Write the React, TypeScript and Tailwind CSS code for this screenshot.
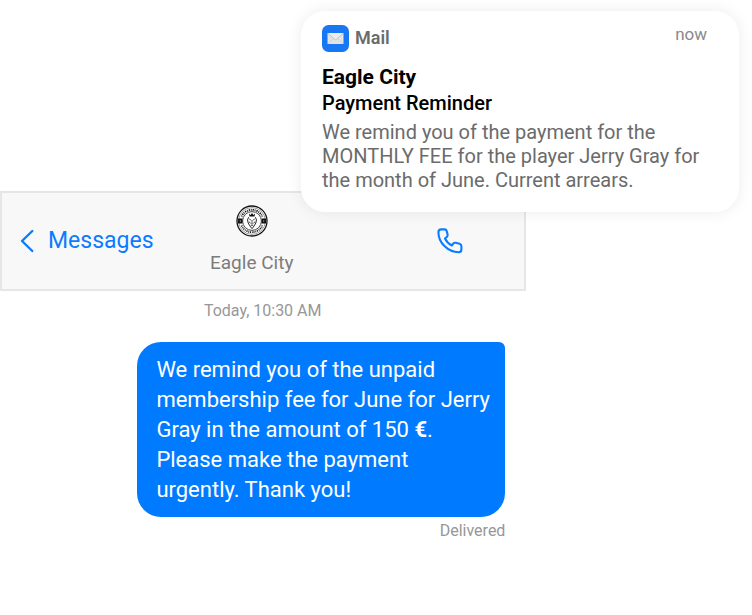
import React from 'react';

interface Message {
  time: string;
  status: string;
}

const message: Message = {
  time: 'Today, 10:30 AM',
  status: 'Delivered',
};

const MailIcon: React.FC = () => (
  <svg viewBox="0 0 27 27" className="h-[27px] w-[27px]" aria-hidden="true">
    <rect width="27" height="27" rx="6.5" fill="#1877f2" />
    <rect x="5.5" y="8" width="16" height="11" rx="0.6" fill="#e2e3e5" />
    <path d="M6 18.6 11.4 13.4M21 18.6l-5.4-5.2" stroke="#c6c8cb" strokeWidth="0.7" />
    <path d="M5.8 8.3 12.6 14.3q.9.7 1.8 0L21.2 8.3" fill="#ececed" stroke="#b9bbbf" strokeWidth="0.8" />
  </svg>
);

const BackIcon: React.FC = () => (
  <svg viewBox="0 0 14 24" className="h-6 w-3.5" fill="none" stroke="currentColor" aria-hidden="true">
    <path d="M12.3 2 2 12l10.3 10" strokeWidth="2.4" strokeLinecap="round" strokeLinejoin="round" />
  </svg>
);

const PhoneIcon: React.FC = () => (
  <svg viewBox="0 0 26 26" className="h-[26px] w-[26px]" fill="none" stroke="currentColor" aria-hidden="true">
    <path
      d="M1.4 4.2Q1.4 1.4 4.2 1.4h3.4q1.7 0 2.1 1.6l.9 3.5q.4 1.6-.9 2.6L8 10.5q2.1 4.6 6.8 7l1.4-1.8q1-1.3 2.6-.9l3.7.9q1.9.5 1.9 2.3v3.4q0 2.8-2.8 2.8C10.8 24.2 1.4 14.6 1.4 4.2Z"
      strokeWidth="2.1"
      strokeLinecap="round"
      strokeLinejoin="round"
    />
  </svg>
);

const ClubCrest: React.FC = () => (
  <svg viewBox="0 0 32 32" className="h-8 w-8" fill="none" stroke="#111" aria-hidden="true">
    <circle cx="16" cy="16" r="15" fill="#fff" strokeWidth="1.3" />
    <circle cx="16" cy="16" r="13.4" strokeWidth="0.4" />
    <circle cx="16" cy="16" r="9.4" strokeWidth="0.8" />
    {/* Ring lettering */}
    <path d="M5.6 11.5a11.4 11.4 0 0 1 20.8 0" strokeWidth="1.8" strokeDasharray="0.9 0.9 1.3 0.8" />
    <path d="M5.6 20.5a11.4 11.4 0 0 0 20.8 0" strokeWidth="1.8" strokeDasharray="1.1 0.9 0.8 0.8" />
    <path d="M2 13.6h4.4v4.8H2zM25.6 13.6H30v4.8h-4.4z" fill="#111" stroke="none" />
    <path d="M3.8 15.4h.9v1.2h-.9zM27.3 15.4h.9v1.2h-.9z" fill="#fff" stroke="none" />
    {/* Crowned head */}
    <path d="m13 8.6 1.6 1.4L16 8l1.4 2L19 8.6l-.5 2.8h-5z" fill="#111" stroke="none" />
    <path d="M12.6 12.2q-2 2.6-.4 5.8 1 2.6 3.8 5.6 2.8-3 3.8-5.6 1.6-3.2-.4-5.8" strokeWidth="0.9" />
    <path d="m13.2 14 2 1.2M18.8 14l-2 1.2M16 15v3M14.5 18.2l1.5 1 1.5-1M14.6 20.4h2.8M13.2 16.6l.8 1.6M18.8 16.6l-.8 1.6" strokeWidth="0.7" />
  </svg>
);

const Notification: React.FC = () => (
  <section className="absolute top-[11px] right-[13px] w-[438px] rounded-3xl bg-white px-[21px] pt-[13px] pb-5 shadow-[0_0_16px_rgba(0,0,0,0.08)]">
    <div className="flex items-start justify-between pr-[11px]">
      <div className="flex items-center gap-1.5">
        <MailIcon />
        <span className="text-lg font-semibold text-[#6b6b6b]">Mail</span>
      </div>
      <time className="text-[17px] leading-5 text-[#8a8a8a]">now</time>
    </div>
    <h2 className="mt-3 text-[21px] leading-[26px] font-bold text-black">Eagle City</h2>
    <h3 className="text-xl leading-[26px] font-medium text-black">Payment Reminder</h3>
    <p className="mt-1 text-xl leading-6 text-[#6b6b6b]">
      We remind you of the payment for the MONTHLY FEE for the player Jerry Gray for the month of June. Current arrears.
    </p>
  </section>
);

const ThreadHeader: React.FC = () => (
  <header className="grid grid-cols-[1fr_auto_1fr] items-center border-2 border-[#e6e6e6] bg-[#f8f8f8] pt-3 pr-[41px] pb-3 pl-[18px]">
    <button type="button" className="flex items-center gap-3.5 text-[23px] leading-7 text-[#0a7cff]">
      <BackIcon />
      Messages
    </button>
    <div className="flex flex-col items-center gap-3">
      <ClubCrest />
      <h1 className="text-[19px] leading-7 text-[#7c7c7c]">Eagle City</h1>
    </div>
    <button type="button" aria-label="Call" className="mr-5 justify-self-end text-[#0a7cff]">
      <PhoneIcon />
    </button>
  </header>
);

export default function App() {
  return (
    <div className="relative min-h-screen bg-white font-[Roboto,sans-serif]">
      <main className="w-[70%] pt-[191px]">
        <ThreadHeader />
        <div className="flex flex-col pr-[21px]">
          <time className="mt-2 pl-5 text-center text-base text-[#979797]">{message.time}</time>
          <div className="mt-[19px] ml-auto w-[368px] rounded-3xl rounded-tr-md bg-[#007bff] pt-[13px] pr-3 pb-3 pl-[19px] text-[22px] leading-[30px] text-white">
            <p>
              We remind you of the unpaid membership fee for June for Jerry Gray in the amount of 150 <b>€</b>.
            </p>
            <p>Please make the payment urgently. Thank you!</p>
          </div>
          <span className="mt-0.5 self-end text-base text-[#979797]">{message.status}</span>
        </div>
      </main>
      <Notification />
    </div>
  );
}
